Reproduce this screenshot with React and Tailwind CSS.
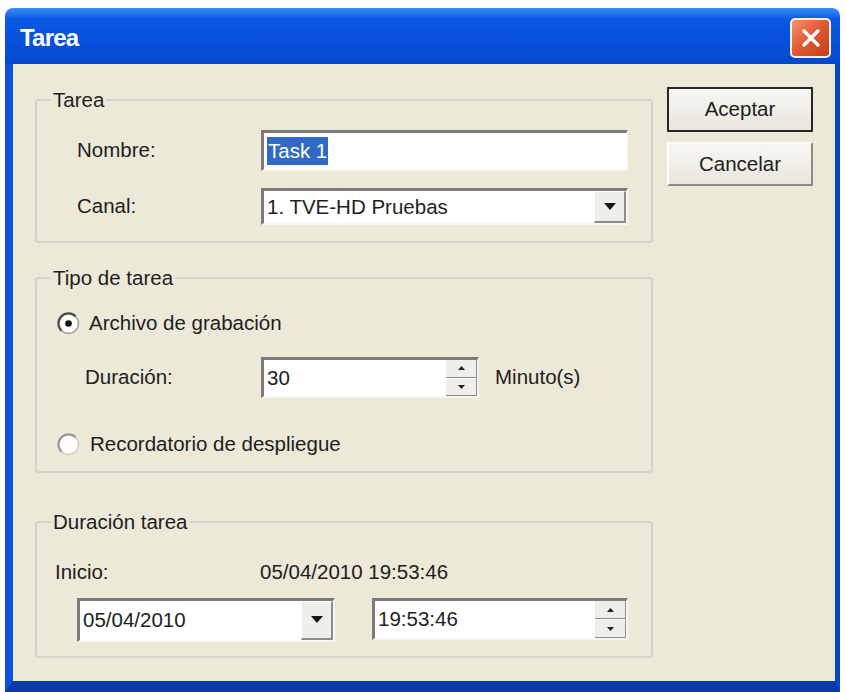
import React from 'react';

const sunken =
  'bg-white border-t-[3px] border-l-[3px] border-b-2 border-r-2 border-t-[#7c7b76] border-l-[#7c7b76] border-b-[#f7f6f1] border-r-[#f7f6f1]';

const GroupBox = ({ title, className = '', children }) => (
  <fieldset className={`border-2 border-[#d6d4c8] rounded-[4px] ${className}`}>
    <legend className="ml-[14px] px-[2px] leading-[24px]">{title}</legend>
    {children}
  </fieldset>
);

const DropButton = () => (
  <div className="w-[32px] self-stretch bg-[#efeee8] border-t border-l border-t-white border-l-white border-b-2 border-r-2 border-b-[#8d8c86] border-r-[#8d8c86] flex items-center justify-center">
    <svg width="12" height="8" viewBox="0 0 12 8">
      <path d="M0 0h12L6 7z" fill="#151515" />
    </svg>
  </div>
);

const SpinButtons = () => (
  <div className="w-[31px] self-stretch flex flex-col">
    <div className="flex-1 bg-[#efeee8] border-b border-b-[#8d8c86] border-r border-r-[#8d8c86] flex items-center justify-center">
      <svg width="7" height="4" viewBox="0 0 7 4">
        <path d="M0 4h7L3.5 0z" fill="#222" />
      </svg>
    </div>
    <div className="flex-1 bg-[#efeee8] border-t border-t-white border-b border-b-[#8d8c86] border-r border-r-[#8d8c86] flex items-center justify-center">
      <svg width="7" height="4" viewBox="0 0 7 4">
        <path d="M0 0h7L3.5 4z" fill="#222" />
      </svg>
    </div>
  </div>
);

const Radio = ({ checked }) => (
  <svg width="23" height="23" viewBox="0 0 23 23" className="shrink-0">
    <circle cx="11.5" cy="11.5" r="10" fill="#fdfdfb" stroke={checked ? '#a3a29c' : '#d0cfc8'} strokeWidth="1.5" />
    <path d="M4.4 18.6A10 10 0 0 1 18.6 4.4" stroke={checked ? '#4d4d4a' : '#9c9b96'} strokeWidth="2.2" fill="none" />
    {checked && <circle cx="11.5" cy="11.5" r="3.3" fill="#111" />}
  </svg>
);

export default function App() {
  return (
    <div className="w-[846px] h-[692px] bg-white pt-[8px] pl-[5px] overflow-hidden font-['Liberation_Sans',Arial,sans-serif] text-[20.5px] text-[#1e1e1c]">
      <div className="w-[835px] h-[684px] flex flex-col rounded-t-[8px] overflow-hidden">
        {/* title bar */}
        <div className="h-[56px] shrink-0 flex items-center justify-between pl-[15px] pr-[9px] bg-linear-to-b from-[#3d8cf6] via-[#0b59e4] via-20% to-[#0448d2]">
          <span className="text-white font-bold text-[24px] tracking-[-0.8px] mt-[3px]">Tarea</span>
          <div className="w-[41px] h-[40px] mt-[4px] rounded-[5px] border-2 border-[#f3f0ee] bg-linear-to-br from-[#f19170] via-[#e0582f] to-[#c23f1d] flex items-center justify-center">
            <svg width="22" height="22" viewBox="0 0 22 22">
              <path d="M4 4L18 18M18 4L4 18" stroke="white" strokeWidth="3.4" strokeLinecap="round" />
            </svg>
          </div>
        </div>

        {/* client area */}
        <div className="flex-1 flex bg-[#ece9d8] border-l-[8px] border-r-[5px] border-b-[11px] border-l-[#0b52dc] border-r-[#0a45c8] border-b-[#0a3aa8] pl-[22px] pt-[23px]">
          <div className="w-[618px] mt-[1px] flex flex-col">
            <GroupBox title="Tarea">
              <div className="pt-[18px] pb-[16px] pl-[40px] flex flex-col gap-[17px]">
                <div className="flex items-center">
                  <span className="w-[184px]">Nombre:</span>
                  <div className={`w-[367px] h-[41px] flex items-center pl-[3px] ${sunken}`}>
                    <span className="bg-[#316ac5] text-white leading-[28px] px-[1px]">Task 1</span>
                  </div>
                </div>
                <div className="flex items-center">
                  <span className="w-[184px]">Canal:</span>
                  <div className={`w-[367px] h-[37px] flex items-center ${sunken}`}>
                    <span className="flex-1 pl-[3px]">1. TVE-HD Pruebas</span>
                    <DropButton />
                  </div>
                </div>
              </div>
            </GroupBox>

            <GroupBox title="Tipo de tarea" className="mt-[23px]">
              <div className="pt-[18px] pb-[12px] flex flex-col">
                <div className="h-[30px] pl-[20px] flex items-center gap-[9px]">
                  <Radio checked />
                  <span>Archivo de grabación</span>
                </div>
                <div className="mt-[19px] pl-[48px] flex items-center">
                  <span className="w-[176px]">Duración:</span>
                  <div className={`w-[218px] h-[41px] flex items-center ${sunken}`}>
                    <span className="flex-1 pl-[3px]">30</span>
                    <SpinButtons />
                  </div>
                  <span className="ml-[16px]">Minuto(s)</span>
                </div>
                <div className="h-[30px] mt-[31px] pl-[20px] flex items-center gap-[10px]">
                  <Radio />
                  <span>Recordatorio de despliegue</span>
                </div>
              </div>
            </GroupBox>

            <GroupBox title="Duración tarea" className="mt-[37px]">
              <div className="pt-[26px] pb-[14px] flex flex-col">
                <div className="h-[24px] pl-[18px] flex items-center">
                  <span className="w-[205px]">Inicio:</span>
                  <span>05/04/2010 19:53:46</span>
                </div>
                <div className="mt-[14px] pl-[40px] flex items-start">
                  <div className={`w-[258px] h-[44px] flex items-center ${sunken}`}>
                    <span className="flex-1 pl-[3px]">05/04/2010</span>
                    <DropButton />
                  </div>
                  <div className={`ml-[37px] w-[256px] h-[42px] flex items-center ${sunken}`}>
                    <span className="flex-1 pl-[3px]">19:53:46</span>
                    <SpinButtons />
                  </div>
                </div>
              </div>
            </GroupBox>
          </div>

          {/* buttons */}
          <div className="ml-[14px] w-[146px] flex flex-col">
            <div className="h-[45px] border-2 border-[#262624] bg-linear-to-b from-[#f8f7f3] to-[#e8e6dd] flex items-center justify-center">
              Aceptar
            </div>
            <div className="h-[44px] mt-[10px] border-t-2 border-l-2 border-t-white border-l-white border-b-2 border-r-2 border-b-[#8d8c86] border-r-[#8d8c86] bg-linear-to-b from-[#f8f7f3] to-[#e8e6dd] flex items-center justify-center">
              Cancelar
            </div>
          </div>
        </div>
      </div>
    </div>
  );
}
